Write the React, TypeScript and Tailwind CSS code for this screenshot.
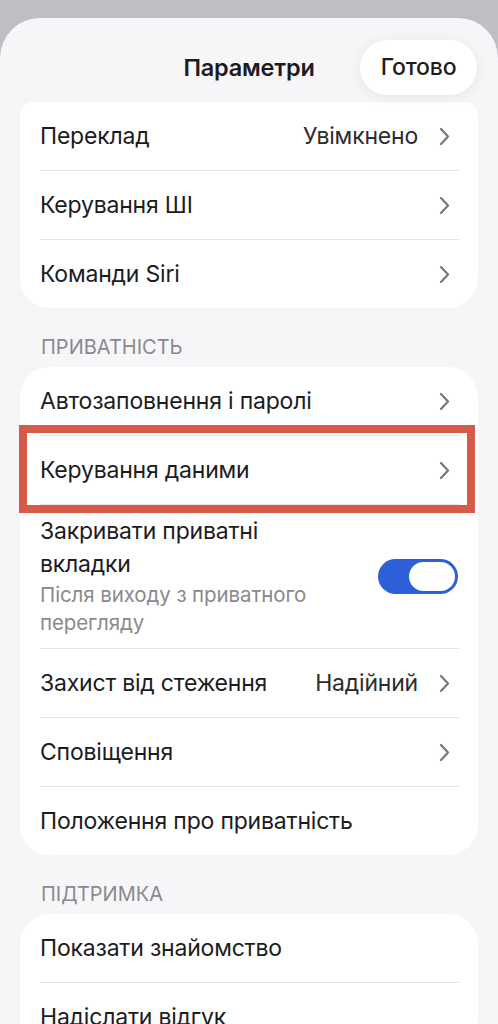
import React from 'react';

function Chevron() {
  return (
    <svg width="11" height="19" viewBox="0 0 11 19" fill="none" className="shrink-0">
      <path d="M2 2l7 7.5L2 17" stroke="#77777c" strokeWidth="2.2" strokeLinecap="round" strokeLinejoin="round" />
    </svg>
  );
}

function Row({ label, value, chevron = true, last = false, children }: { label: string; value?: string; chevron?: boolean; last?: boolean; children?: React.ReactNode }) {
  return (
    <div className="relative">
      <div className="flex h-[68px] items-center pl-[20px] pr-[28px]">
        <span className="flex-1 text-[23px] tracking-[-0.2px] text-[#1c1c1e]">{label}</span>
        {value && <span className="mr-[21px] text-[23px] tracking-[-0.2px] text-[#2c2c2e]">{value}</span>}
        {chevron && <Chevron />}
      </div>
      {!last && <div className="ml-[20px] mr-[19px] h-px bg-[#e3e3e6]" />}
      {children}
    </div>
  );
}

function SectionLabel({ text }: { text: string }) {
  return (
    <div className="px-[41px] pt-[28px] pb-[9px] text-[20px] leading-[22px] text-[#8a8a8e]">{text}</div>
  );
}

export default function App() {
  return (
    <div className="min-h-screen bg-[#bfbfc3] pt-[18px] font-['Inter',sans-serif]">
      <div className="min-h-[1006px] rounded-t-[40px] bg-[#f6f6f8] pb-10">
        {/* Cabecera */}
        <div className="grid grid-cols-[1fr_auto_1fr] items-center pt-[22px]">
          <div />
          <h1 className="text-[23.5px] font-semibold tracking-[-0.2px] text-[#1c1c1e]">Параметри</h1>
          <div className="flex justify-end pr-[21px]">
            <button className="flex h-[55px] w-[117px] items-center justify-center rounded-full bg-white text-[23px] font-medium tracking-[-0.2px] text-[#1c1c1e] shadow-[0_2px_14px_rgba(0,0,0,0.07)]">
              Готово
            </button>
          </div>
        </div>

        <div className="mt-[7px] px-[20px]">
          <div className="rounded-b-[30px] rounded-t-[14px] bg-white">
            <Row label="Переклад" value="Увімкнено" />
            <Row label="Керування ШІ" />
            <Row label="Команди Siri" last />
          </div>
        </div>

        <SectionLabel text="ПРИВАТНІСТЬ" />
        <div className="px-[20px]">
          <div className="rounded-[30px] bg-white">
            <Row label="Автозаповнення і паролі" />
            <Row label="Керування даними">
              <div className="pointer-events-none absolute top-[-11px] bottom-[-8px] left-[-1px] right-[3px] border-[8px] border-[#d65a47]" />
            </Row>
            <div>
              <div className="flex items-center pl-[20px] pr-[20px] pt-[10px] pb-[11px]">
                <div className="flex-1">
                  <div className="w-[290px] text-[23px] leading-[33px] tracking-[-0.2px] text-[#1c1c1e]">Закривати приватні вкладки</div>
                  <div className="w-[290px] text-[20.5px] leading-[28px] tracking-[-0.1px] text-[#8a8a8e]">Після виходу з приватного перегляду</div>
                </div>
                <div className="flex h-[35px] w-[80px] items-center justify-end rounded-full bg-[#2d5fd8] p-[3px]">
                  <div className="h-[29px] w-[46px] rounded-full bg-white" />
                </div>
              </div>
              <div className="ml-[20px] mr-[19px] h-px bg-[#e3e3e6]" />
            </div>
            <Row label="Захист від стеження" value="Надійний" />
            <Row label="Сповіщення" />
            <Row label="Положення про приватність" chevron={false} last />
          </div>
        </div>

        <SectionLabel text="ПІДТРИМКА" />
        <div className="px-[20px]">
          <div className="rounded-[30px] bg-white">
            <Row label="Показати знайомство" chevron={false} />
            <Row label="Надіслати відгук" chevron={false} last />
          </div>
        </div>
      </div>
    </div>
  );
}
